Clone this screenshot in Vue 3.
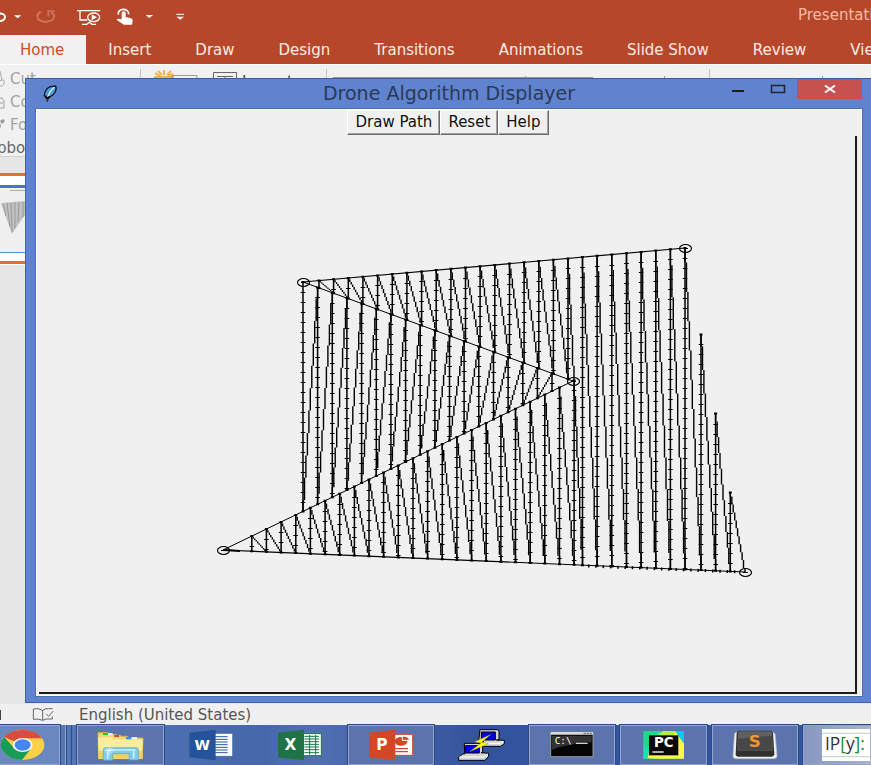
<script setup>
const tabs = ['Home', 'Insert', 'Draw', 'Design', 'Transitions', 'Animations', 'Slide Show', 'Review', 'View']

const A = [223, 550]
const B = [303, 282]
const C = [573, 381]
const D = [685, 248]
const E = [745, 572]

const STEP = 14.65
const TICK = 10
const COLUMN = 1.45

const yOn = (p, q, x) => p[1] + ((q[1] - p[1]) * (x - p[0])) / (q[0] - p[0])

function columns(start, count, top, bottom) {
  return Array.from({ length: count }, (_, i) => {
    const x = start + i * STEP
    return { x, y1: yOn(top[0], top[1], x), y2: yOn(bottom[0], bottom[1], x) }
  })
}

// Slanted return leg, drawn as a run of short vertical strokes.
function stair(x1, y1, x2, y2) {
  const n = Math.max(2, Math.round((x2 - x1) / COLUMN))
  const dy = (y2 - y1) / n
  const dx = (x2 - x1) / n
  let d = ''
  for (let k = 0; k <= n; k++) {
    const from = y1 + dy * Math.max(0, k - 0.5)
    const to = y1 + dy * Math.min(n, k + 0.5)
    d += `M${(x1 + dx * k).toFixed(1)} ${from.toFixed(1)}V${to.toFixed(1)}`
  }
  return d
}

const upper = columns(319, 18, [B, D], [B, C])
const right = columns(582.5, 8, [B, D], [A, E])
const teeth = columns(701, 3, [D, E], [A, E])
const lower = columns(251.8, 23, [A, C], [A, E])
const inner = columns(303, 18, [B, C], [A, C])
const all = [...upper, ...right, ...teeth, ...lower, ...inner]

let verticals = ''
let ticks = ''
let dots = ''
for (const c of all) {
  verticals += `M${c.x.toFixed(1)} ${c.y1.toFixed(1)}V${c.y2.toFixed(1)}`
  for (let y = c.y1 + TICK; y < c.y2 - 1; y += TICK) {
    ticks += `M${(c.x - 2.3).toFixed(1)} ${Math.round(y) + 0.5}h4.600`
  }
  dots += `M${(c.x - 1.5).toFixed(1)} ${c.y1.toFixed(1)}h3M${(c.x - 1.5).toFixed(1)} ${c.y2.toFixed(1)}h3`
}

let slants = ''
const descend = (list) => {
  for (let i = 0; i < list.length - 1; i++) {
    slants += stair(list[i].x, list[i].y1, list[i + 1].x, list[i + 1].y2)
  }
}
descend(upper)
descend([...right, ...teeth])
descend(lower)
slants += stair(upper[17].x, upper[17].y1, 574, C[1])
slants += stair(lower[22].x, lower[22].y1, right[0].x, right[0].y2)
slants += stair(teeth[2].x, teeth[2].y1, E[0], E[1])
for (let i = 0; i < inner.length - 1; i++) {
  slants += stair(inner[i].x, inner[i].y2, inner[i + 1].x, inner[i + 1].y1)
}

const outer = `M${B}L${D}M${A}L${E}`
const folds = `M${A}L${C}M${B}L${C}`
const vertices = [A, B, C, D, E]
</script>

<template>
  <div class="desktop">
    <header class="titlebar">
      <div class="quick">
        <button type="button" aria-label="Undo">
          <svg width="30" height="35" viewBox="0 0 90 105"><path d="M-6 41C22 36 22 66-6 63" fill="none" stroke="#fff" stroke-width="6" /><path d="M42 46h22l-11 9z" fill="#fff" /></svg>
        </button>
        <button type="button" aria-label="Redo">
          <svg width="40" height="35" viewBox="90 0 120 105"><path d="M122 35C106 45 109 65 137 65C163 65 169 46 153 37" fill="none" stroke="#cf755d" stroke-width="6" /><path d="M142 33h22M145 32v18" fill="none" stroke="#cf755d" stroke-width="5" /></svg>
        </button>
        <button type="button" aria-label="Start slide show">
          <svg width="40" height="35" viewBox="210 0 120 105"><path d="M231 32h70M240 33v27h22M246 73h14l8-6 8 6h12" fill="none" stroke="#fff" stroke-width="4" /><ellipse cx="281" cy="52" rx="18" ry="13" fill="#b7472a" stroke="#fff" stroke-width="4" /><path d="M275 43l16 9-16 9z" fill="#fff" /></svg>
        </button>
        <button type="button" aria-label="Touch mode">
          <svg width="50" height="35" viewBox="330 0 150 105"><path d="M355 44C351 23 388 23 386 43" fill="none" stroke="#fff" stroke-width="5" /><path d="M365 58V38q6-8 12 0v13l16 4q6 2 5 8l-2 11h-24l-22-14q2-6 15-2z" fill="#fff" /><path d="M437 45h22l-11 9z" fill="#fff" /></svg>
        </button>
        <button type="button" aria-label="Customize toolbar">
          <svg width="40" height="35" viewBox="480 0 120 105"><path d="M529 43h23" stroke="#fff" stroke-width="3" /><path d="M529 50h23l-11 9z" fill="#fff" /></svg>
        </button>
      </div>
      <span class="doc">Presentati</span>
    </header>

    <nav class="tabs">
      <button v-for="t in tabs" :key="t" type="button" :class="{ active: t === 'Home' }">{{ t }}</button>
    </nav>

    <section class="ribbon">
      <div class="clip">
        <span><svg width="10" height="16" viewBox="0 0 10 16"><path d="M0 0l2 9M0 10q5-3 4 2t-5 2" fill="none" stroke="#a9a9a9" /></svg>Cut</span>
        <span><svg width="10" height="16" viewBox="0 0 10 16"><path d="M-1 4h3l2 3v7h-5M0 9h3" fill="none" stroke="#a79ba9" /></svg>Copy</span>
        <span><svg width="10" height="16" viewBox="0 0 10 16"><path d="M0 4l3-2 2 2-3 3zM0 6l1 3-1 3" fill="#999" /></svg>Format</span>
        <b>pboard</b>
      </div>
      <svg class="groups" width="740" height="20" viewBox="131 65 740 20">
        <path d="M140.500 69v16M326.500 69v16M709.500 69v16" stroke="#c6c6c6" />
        <path d="M155 73l5 3M158 71l4 4M164 70v5M171 71l-4 4M173 74l-5 2M154 77h20" stroke="#eeb44e" stroke-width="2" />
        <path d="M172 78v-2.500h25V85M333 85v-7.500h260V85M525.500 76v6M664.500 76v6M822.500 76v6" fill="none" stroke="#999" />
        <path d="M213.500 85V72.500h23V85M217 76.500h16M225 77v4" fill="none" stroke="#666" />
        <text x="242" y="87" font-size="15" fill="#444">Layout</text>
      </svg>
    </section>

    <main class="work">
      <svg width="30" height="92" viewBox="0 173 30 92">
        <path d="M0 173h30v92H0z" fill="#fff" />
        <path d="M0 173h30v3H0zM0 261h30v3H0z" fill="#f1663f" />
        <path d="M0 185h30v3H0z" fill="#4d72c0" />
        <path d="M0 188h30v64H0z" fill="#f0f0f0" />
        <path d="M10 190.500h20" stroke="#aaa" />
        <path d="M1 203l24-2v14l-5 7-8 12z" fill="#c2c2c2" />
        <path d="M3 204l3 12M7 203l3 24M11 203l1 29M15 202v26M19 202l-1 20M23 202v15" stroke="#999" />
        <path d="M0 252.500h30" stroke="#4f91cc" />
      </svg>
    </main>

    <footer class="status">
      <i></i>
      <svg width="22" height="16" viewBox="96 78 66 48"><path d="M128 88q-14-8-28-4v31q14-3 28 3q9-6 29-4v-8M128 88v29M128 88q8-6 18-5h12M138 98l8 8 14-16" fill="none" stroke="#666" stroke-width="3" /></svg>
      <span>English (United States)</span>
    </footer>

    <nav class="taskbar">
      <button type="button" class="cell lit chrome" aria-label="Chrome">
        <svg width="45" height="32" viewBox="0 147 135 96">
          <ellipse cx="68" cy="195" rx="65" ry="45" fill="#fcd046" />
          <path d="M68 195L13 171A65 45 0 0 1 126 175H68z" fill="#d94b3d" />
          <path d="M13 171A65 45 0 0 0 66 240L92 207 68 215 42 204z" fill="#189c58" />
          <ellipse cx="68" cy="195" rx="30" ry="21" fill="#f4f4f4" />
          <ellipse cx="68" cy="195" rx="24" ry="17" fill="#4687ef" />
        </svg>
      </button>
      <div class="stack"><i></i><i></i></div>
      <button type="button" class="cell lit" aria-label="File Explorer">
        <svg width="47" height="32" viewBox="287 147 141 96">
          <path d="M290 158h30l5 6h22l5 5h26l5 5h42l-2 62H292z" fill="#f3d777" stroke="#d6b14e" stroke-width="3" />
          <path d="M320 160h14v5h-14zM341 165h16v5h-16zM390 172h17v6h-17z" fill="#fff" />
          <path d="M290 172h40l6 6h88v18l-4 40H292z" fill="#fcec9c" />
          <path d="M290 212h134v24H292z" fill="#edcf70" />
          <path d="M305 159h15v6h-15z" fill="#25c425" /><path d="M339 165h15v6h-15z" fill="#ce4330" /><path d="M374 171h16v7h-16z" fill="#2e96e6" />
          <path d="M306 207q1-4 6-4h93q6 0 6 6v31h-27v-19h-50v20h-28z" fill="#7ecdeb" stroke="#52a6cc" stroke-width="2" />
          <path d="M313 210h90M319 214v24M397 214v22" stroke="#c8f1fb" stroke-width="5" />
          <path d="M324 198v28M310 212h28M315 203l18 18M333 203l-18 18" stroke="#effdff" stroke-width="2" />
        </svg>
      </button>
      <button type="button" class="cell" aria-label="Word">
        <svg width="44" height="32" viewBox="563 147 132 96">
          <path d="M635 160h59v69h-59z" fill="#fff" stroke="#2b579a" stroke-width="2" />
          <path d="M642 170h37M642 178h37M642 186h37M642 194h37M642 202h37M642 210h37M642 218h37" stroke="#2b579a" stroke-width="3" />
          <path d="M564 158l79-9v92l-79-9z" fill="#25529c" />
          <text x="603" y="209" class="letter" font-size="42">W</text>
        </svg>
      </button>
      <button type="button" class="cell" aria-label="Excel">
        <svg width="44" height="32" viewBox="57 147 132 96">
          <path d="M130 161h57v66h-57z" fill="#fff" stroke="#207346" stroke-width="3" />
          <path d="M136 169h44M136 177h44M136 185h44M136 193h44M136 201h44M136 209h44M136 218h44M152 165v59M170 165v59" stroke="#207346" stroke-width="3" />
          <path d="M57 158l78-9v92l-78-9z" fill="#207346" />
          <text x="94" y="211" class="letter" font-size="46">X</text>
        </svg>
      </button>
      <button type="button" class="cell lit" aria-label="PowerPoint">
        <svg width="44" height="32" viewBox="328 147 132 96">
          <path d="M400 163h59v63h-59z" fill="#fff" stroke="#d24726" stroke-width="3" />
          <ellipse cx="424" cy="184" rx="19" ry="13" fill="#d24726" /><path d="M428 168v13h22q-2-12-22-13z" fill="#d24726" stroke="#fff" stroke-width="3" />
          <path d="M407 206h38M407 215h38" stroke="#d24726" stroke-width="4" />
          <path d="M328 158l79-9v92l-79-9z" fill="#d24726" />
          <text x="367" y="211" class="letter" font-size="46">P</text>
        </svg>
      </button>
      <button type="button" class="cell" aria-label="PuTTY">
        <svg width="47" height="32" viewBox="597 147 141 96">
          <g stroke="#000" stroke-width="3">
            <path d="M663 149h52l5 4v27h-8l24 1v10l-11 8h-66l8-9 8-6h-16z" fill="#d4d4d4" />
            <path d="M667 156h42v24h-42z" fill="#0000f0" />
            <path d="M616 190h50l5 4v24h-5l23 2v9l-11 12h-79v-9l12-10h6z" fill="#d4d4d4" />
            <path d="M619 197h42v22h-42z" fill="#0000f0" />
          </g>
          <path d="M601 231h72l13-9M675 190h48l10-6" fill="none" stroke="#fff" stroke-width="3" />
          <path d="M696 163l-50 23 20 3-34 26 56-24-20-4z" fill="#ff0" stroke="#7f7900" stroke-width="1" />
        </svg>
      </button>
      <button type="button" class="cell lit" aria-label="Command Prompt">
        <svg width="44" height="32" viewBox="89 147 132 96">
          <path d="M91 157h127v73H91z" fill="#050505" stroke="#999" stroke-width="3" /><path d="M91 156h127v8H91z" fill="#d8d8d8" /><path d="M190 160h24" stroke="#555" stroke-width="3" stroke-dasharray="6 3" />
          <path d="M94 167h120v20q-60 2-120 22z" fill="#333" />
          <text x="103" y="192" font-size="28" class="mono">C:\</text><path d="M167 190h35" stroke="#fff" stroke-width="3" />
        </svg>
      </button>
      <button type="button" class="cell lit" aria-label="PyCharm">
        <svg width="41" height="32" viewBox="369 147 123 96">
          <path d="M370 153h122v83H370z" fill="#21d789" /><path d="M430 153h38l24 35v48H410l-40-2z" fill="#fcf84a" /><path d="M465 153h27v38z" fill="#09c7ed" /><path d="M370 190l20 18-8 28h-12z" fill="#1bdfb0" /><path d="M410 162l28-9h26v20z" fill="#b3ec3c" />
          <path d="M387 166h88v60h-88z" fill="#080808" />
          <text x="431" y="200" class="letter" font-size="40">PC</text><path d="M397 216h34" stroke="#fff" stroke-width="4" />
        </svg>
      </button>
      <button type="button" class="cell lit" aria-label="Sublime Text">
        <svg width="46" height="32" viewBox="634 145 138 96">
          <path d="M646 155h112q6 2 6 10l5 62q-1 7-10 7H647q-10 0-10-7l4-61q0-9 5-11z" fill="#eee" stroke="#bbb" stroke-width="2" />
          <path d="M655 150h95q6 0 7 8l4 63q-1 7-8 7H652q-7 0-7-7l3-62q1-9 7-9z" fill="#303030" />
          <path d="M656 152h92q5 0 6 6l3 49q0 4-6 4H656q-6 0-6-5l2-48q0-6 4-6z" fill="#606060" /><path d="M652 174l102-9 2 45H650z" fill="#484848" />
          <text x="702" y="199" class="letter sub" font-size="50">S</text>
        </svg>
      </button>
      <button type="button" class="cell lit last" aria-label="IPython">
        <svg width="48" height="32" viewBox="904 147 144 96">
          <path d="M904 147h144v96H904z" fill="#fff" /><path d="M904 160h144M904 230h144" stroke="#9bb8a0" stroke-width="2" />
          <text x="913" y="211" font-size="52" class="ip">IP<tspan fill="#218c21">[</tspan>y<tspan fill="#218c21">]:</tspan></text>
        </svg>
      </button>
    </nav>

    <section class="window">
      <div class="caption">
        <svg class="feather" width="15" height="18" viewBox="131 250 45 54"><path d="M169 256q5 15-9 27l-12 8-4 9-3-9-6-6q2-21 18-27z" fill="#4e9bd5" stroke="#101820" stroke-width="4" /><path d="M165 260q-17 13-21 38" fill="none" stroke="#d9efff" stroke-width="4" /><path d="M138 285l6 9 7-7" fill="none" stroke="#000" stroke-width="5" /></svg>
        <h1>Drone Algorithm Displayer</h1>
        <div class="controls">
          <button type="button" aria-label="Minimize"><svg width="12" height="20" viewBox="0 0 12 20"><path d="M0 12h12" stroke="#1d1d1d" stroke-width="2" /></svg></button>
          <button type="button" aria-label="Maximize"><svg width="16" height="20" viewBox="0 0 16 20"><path d="M1.500 6.500h13v7h-13z" fill="none" stroke="#1e2634" stroke-width="1.500" /></svg></button>
          <button type="button" class="close" aria-label="Close"><svg width="12" height="20" viewBox="0 0 12 20"><path d="M1 6.500l10 7M11 6.500l-10 7" stroke="#fff" stroke-width="2" /></svg></button>
        </div>
      </div>
      <div class="client">
        <div class="tools">
          <button type="button">Draw Path</button>
          <button type="button">Reset</button>
          <button type="button">Help</button>
        </div>
        <div class="canvas">
          <svg viewBox="39 136 816 556" role="img" aria-label="Drone path">
            <g fill="none" stroke="#000">
              <path :d="outer" stroke-width="1.200" />
              <path :d="folds" />
              <path :d="verticals" stroke-width="1.500" />
              <path :d="slants" stroke-width="1.400" />
              <path :d="ticks" />
              <path :d="dots" stroke-width="2" />
              <path d="M588 566L740 572" stroke-width="3" stroke-dasharray="1.500 5.800" />
              <path d="M224 550l16 1" stroke-width="2" />
              <g v-for="v in vertices" :key="v[0]">
                <ellipse :cx="v[0] + 0.5" :cy="v[1] + 0.5" rx="6" ry="4" stroke-width="1.200" />
                <path :d="`M${v[0] - 2} ${v[1] + 0.5}h5`" />
              </g>
            </g>
          </svg>
        </div>
      </div>
    </section>
  </div>
</template>

<style>
body {
  margin: 0;
}
</style>

<style scoped>
.desktop {
  position: relative;
  display: flex;
  flex-direction: column;
  min-height: 100vh;
  overflow: hidden;
  background: #e6e6e6;
  font-family: "DejaVu Sans", sans-serif;
  font-size: 15px;
}
button {
  margin: 0;
  padding: 0;
  border: 0;
  background: none;
  font: inherit;
  color: inherit;
}
svg {
  display: block;
  flex: none;
}
.titlebar {
  display: flex;
  justify-content: space-between;
  height: 35px;
  background: #b7472a;
}
.quick {
  display: flex;
}
.doc {
  width: 73px;
  overflow: hidden;
  white-space: nowrap;
  line-height: 31px;
  color: #f5bba5;
}
.tabs {
  display: flex;
  height: 29px;
  margin-left: -2px;
  overflow: hidden;
  background: #b7472a;
  border-bottom: 1px solid #fff;
  color: #fdebe5;
}
.tabs button {
  flex: none;
  padding: 0 22px;
  line-height: 30px;
}
.tabs .active {
  background: #f1f1f1;
  color: #d14b2b;
}
.ribbon {
  display: flex;
  height: 91px;
  overflow: hidden;
  background: #f1f1f1;
  border-bottom: 1px solid #d2d2d2;
}
.clip {
  display: flex;
  flex-direction: column;
  width: 131px;
  padding-top: 2px;
  color: #a3a3a3;
}
.clip span,
.clip b {
  display: flex;
  flex: none;
  align-items: center;
  height: 23px;
}
.clip b {
  margin-left: -3px;
  font-weight: 400;
  color: #666;
}
.work {
  flex: 1;
  padding-top: 16px;
}
.status {
  display: flex;
  align-items: center;
  height: 21px;
  background: #f0f0f0;
  color: #555;
}
.status i {
  width: 1px;
  height: 10px;
  margin-right: 31px;
  background: #444;
}
.status span {
  padding-left: 25px;
}
.taskbar {
  display: flex;
  gap: 5px;
  height: 40px;
  background: linear-gradient(90deg, #5b7cb8 0, #4668aa 30%, #5170b0 36%, #34539d 55%, #3453a0 100%);
}
.cell {
  display: flex;
  flex: 1 1 0;
  align-items: center;
  justify-content: center;
  box-sizing: border-box;
  min-width: 0;
}
.lit {
  background: #5c74ad;
  border: 1px solid #8fa4cf;
  outline: 1px solid #2e4b86;
  outline-offset: 0;
}
.chrome {
  flex: 0 0 60px;
  justify-content: flex-start;
  border-left: 0;
  background: #6b87bf;
}
.stack {
  display: flex;
  gap: 4px;
  width: 7px;
}
.stack i {
  width: 2px;
  background: #8fa4cf;
  border-right: 1px solid #2e4b86;
}
.last {
  flex: 0 0 68px;
  justify-content: flex-end;
  padding-right: 1px;
  border-right: 0;
  background: linear-gradient(90deg, #8797c0, #a9b4cf);
}
.letter {
  font-family: "DejaVu Sans", sans-serif;
  font-weight: 700;
  fill: #fff;
  text-anchor: middle;
}
.sub {
  fill: #f49331;
}
.mono {
  font-family: "DejaVu Sans Mono", monospace;
  fill: #fff;
}
.ip {
  font-family: "Open Sans", sans-serif;
  fill: #333;
}
.window {
  position: absolute;
  top: 78px;
  right: 0;
  bottom: 62px;
  left: 25px;
  display: flex;
  flex-direction: column;
  box-sizing: border-box;
  padding: 0 9px 6px 10px;
  background: #5f83ce;
  border-top: 1px solid #3b5d9e;
  border-left: 1px solid #3f63ac;
  border-bottom: 1px solid #3f63ac;
}
.caption {
  display: grid;
  flex: none;
  grid-template-columns: 1fr auto 1fr;
  height: 30px;
}
.feather {
  margin: 5px 0 0 7px;
}
h1 {
  margin: 0;
  font-size: 19px;
  font-weight: 400;
  line-height: 28px;
  color: #2b3a58;
}
.controls {
  display: flex;
  align-items: flex-start;
  justify-content: flex-end;
}
.controls button {
  padding: 0 11px 0 15px;
}
.controls .close {
  display: flex;
  justify-content: center;
  width: 65px;
  height: 20px;
  padding: 0;
  background: #c75050;
}
.client {
  display: flex;
  flex: 1;
  flex-direction: column;
  padding: 0 4px 1px 2px;
  background: #f0f0f0;
  border: 1px solid #fff;
  outline: 1px solid #4a6db5;
}
.tools {
  display: flex;
  flex: none;
  justify-content: center;
  height: 26px;
}
.tools button {
  height: 25px;
  padding: 0 7px;
  border: 1px solid;
  border-color: #fff #6a6a6a #6a6a6a #fff;
  box-shadow: inset -1px -1px #a3a3a3;
  line-height: 23px;
  color: #111;
}
.canvas {
  flex: 1;
  border-right: 2px solid #1b1b1b;
  border-bottom: 2px solid #1b1b1b;
}
.canvas svg {
  width: 100%;
}
</style>
